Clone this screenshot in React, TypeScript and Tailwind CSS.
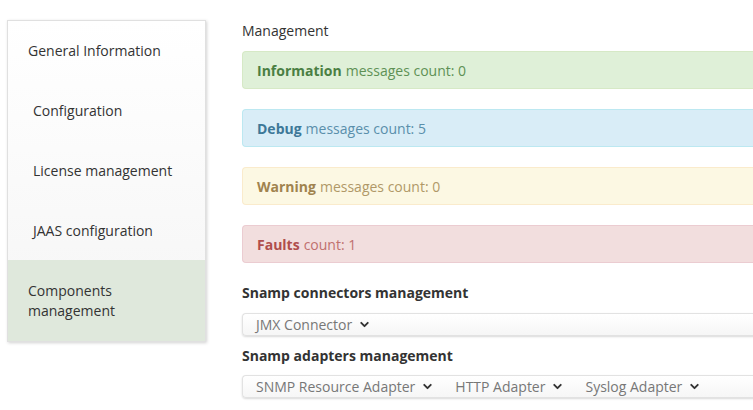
import { ChevronDown } from "lucide-react";
import clsx from "clsx";

const menu = [
  { label: "General Information", indent: false },
  { label: "Configuration", indent: true },
  { label: "License management", indent: true },
  { label: "JAAS configuration", indent: true },
];

const alerts = [
  { bold: "Information", rest: "messages count: 0", cls: "bg-[#dff0d8] border-[#d6e9c6]", b: "text-[#4a7f43]", r: "text-[#5e9155]" },
  { bold: "Debug", rest: "messages count: 5", cls: "bg-[#d9edf7] border-[#bce8f1]", b: "text-[#3d7898]", r: "text-[#5a8fab]" },
  { bold: "Warning", rest: "messages count: 0", cls: "bg-[#fcf8e3] border-[#faebcc]", b: "text-[#a0834f]", r: "text-[#b09868]" },
  { bold: "Faults", rest: "count: 1", cls: "bg-[#f2dede] border-[#ebccd1]", b: "text-[#b04e4c]", r: "text-[#c0706e]" },
];

function Dropdown({ label }: { label: string }) {
  return (
    <span className="flex items-center gap-[6px] text-[#777]">
      {label}
      <ChevronDown className="w-[13px] h-[13px] text-[#333]" strokeWidth={3.5} />
    </span>
  );
}

function Bar({ items }: { items: string[] }) {
  return (
    <div className="h-[23px] flex items-center gap-[21px] pl-[13px] rounded-l-[4px] border border-[#e2e2e2] border-r-0 bg-gradient-to-b from-white to-[#f6f6f6] shadow-[0_1px_2px_rgba(0,0,0,0.15)]">
      {items.map((i) => (
        <Dropdown key={i} label={i} />
      ))}
    </div>
  );
}

export default function App() {
  return (
    <div
      className="w-[753px] h-[410px] overflow-hidden bg-white flex text-[14px] text-[#333]"
      style={{ fontFamily: '"Open Sans", "Noto Sans", sans-serif' }}
    >
      {/* Sidebar */}
      <aside className="ml-[7px] mt-[20px] w-[199px] h-[322px] shrink-0 flex flex-col bg-gradient-to-b from-white to-[#f5f5f5] border border-[#e0e0e0] shadow-[1px_1px_3px_rgba(0,0,0,0.18)]">
        {menu.map((m, i) => (
          <div
            key={m.label}
            className={clsx(
              "flex items-center shrink-0",
              i === 0 ? "h-[59px]" : "h-[60px]",
              m.indent ? "pl-[25px]" : "pl-[20px]"
            )}
          >
            {m.label}
          </div>
        ))}
        <div className="flex-1 bg-[#dfe8dc] pl-[20px] flex items-center leading-[20px]">
          Components
          <br />
          management
        </div>
      </aside>

      {/* Main */}
      <main className="ml-[36px] w-[600px] shrink-0 flex flex-col">
        <div className="mt-[21px] h-[20px] leading-[20px]">Management</div>
        <div className="mt-[10px] flex flex-col gap-[20px]">
          {alerts.map((a) => (
            <div
              key={a.bold}
              className={clsx("h-[38px] border rounded-l-[4px] border-r-0 flex items-center pl-[14px]", a.cls)}
            >
              <span className={clsx("font-bold", a.b)}>{a.bold}</span>
              <span className={clsx("ml-[4px]", a.r)}>{a.rest}</span>
            </div>
          ))}
        </div>
        <div className="mt-[20px] font-bold leading-[20px]">Snamp connectors management</div>
        <div className="mt-[10px]">
          <Bar items={["JMX Connector"]} />
        </div>
        <div className="mt-[10px] font-bold leading-[20px]">Snamp adapters management</div>
        <div className="mt-[9px]">
          <Bar items={["SNMP Resource Adapter", "HTTP Adapter", "Syslog Adapter"]} />
        </div>
      </main>
    </div>
  );
}
